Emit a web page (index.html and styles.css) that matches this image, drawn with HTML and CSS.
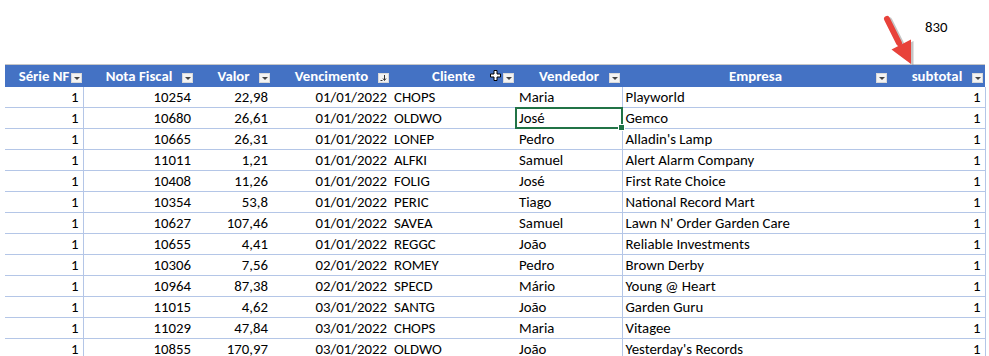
FILE: index.html
```html
<!DOCTYPE html>
<html>
<head>
<meta charset="utf-8">
<link rel="stylesheet" href="styles.css">
</head>
<body>
<div class="top">
  <span class="total">830</span>
  <svg class="arrow" width="60" height="70" viewBox="870 5 60 70">
    <g transform="translate(2.5,1.5)" fill="#8c8c8c" stroke="#8c8c8c" opacity="0.5">
      <line x1="887" y1="19" x2="899" y2="43" stroke-width="6" stroke-linecap="round"/>
      <polygon points="911,39.5 891.5,49.5 911,64" stroke-width="0"/>
    </g>
    <g fill="#e8423a" stroke="#e8423a">
      <line x1="887" y1="19" x2="899" y2="43" stroke-width="6" stroke-linecap="round"/>
      <polygon points="911,39.5 891.5,49.5 911,64" stroke-width="0"/>
    </g>
  </svg>
</div>
<table class="sheet">
  <colgroup>
    <col style="width:78px"><col style="width:112px"><col style="width:77px"><col style="width:119px"><col style="width:125px"><col style="width:106px"><col style="width:267px"><col style="width:96px">
  </colgroup>
  <thead>
    <tr>
      <th class="c1">Série NF<span class="dd"></span></th>
      <th>Nota Fiscal<span class="dd"></span></th>
      <th>Valor<span class="dd"></span></th>
      <th>Vencimento<span class="dd sort"><svg width="9" height="8" viewBox="0 0 9 8"><path d="M5.5 1v5M4 4.5l1.5 2 1.5-2" stroke="#333" stroke-width="1" fill="none"/><path d="M1.5 6.5h2" stroke="#333"/></svg></span></th>
      <th>Cliente<svg class="cursor" width="11" height="11" viewBox="0 0 11 11"><path d="M4 0.5h3v3.5h3.5v3h-3.5v3.5h-3v-3.5h-3.5v-3h3.5z" fill="#fff" stroke="#000" stroke-width="1"/></svg><span class="dd"></span></th>
      <th class="c6">Vendedor<span class="dd"></span></th>
      <th class="c7">Empresa<span class="dd"></span></th>
      <th class="c8">subtotal<span class="dd"></span></th>
    </tr>
  </thead>
  <tbody>
    <tr><td class="c1 r">1</td><td class="r">10254</td><td class="r">22,98</td><td class="r">01/01/2022</td><td>CHOPS</td><td class="c6">Maria</td><td class="c7">Playworld</td><td class="c8 r">1</td></tr>
    <tr><td class="c1 r">1</td><td class="r">10680</td><td class="r">26,61</td><td class="r">01/01/2022</td><td>OLDWO</td><td class="c6 sel">José<span class="selbox"><span class="handle"></span></span></td><td class="c7">Gemco</td><td class="c8 r">1</td></tr>
    <tr><td class="c1 r">1</td><td class="r">10665</td><td class="r">26,31</td><td class="r">01/01/2022</td><td>LONEP</td><td class="c6">Pedro</td><td class="c7">Alladin's Lamp</td><td class="c8 r">1</td></tr>
    <tr><td class="c1 r">1</td><td class="r">11011</td><td class="r">1,21</td><td class="r">01/01/2022</td><td>ALFKI</td><td class="c6">Samuel</td><td class="c7">Alert Alarm Company</td><td class="c8 r">1</td></tr>
    <tr><td class="c1 r">1</td><td class="r">10408</td><td class="r">11,26</td><td class="r">01/01/2022</td><td>FOLIG</td><td class="c6">José</td><td class="c7">First Rate Choice</td><td class="c8 r">1</td></tr>
    <tr><td class="c1 r">1</td><td class="r">10354</td><td class="r">53,8</td><td class="r">01/01/2022</td><td>PERIC</td><td class="c6">Tiago</td><td class="c7">National Record Mart</td><td class="c8 r">1</td></tr>
    <tr><td class="c1 r">1</td><td class="r">10627</td><td class="r">107,46</td><td class="r">01/01/2022</td><td>SAVEA</td><td class="c6">Samuel</td><td class="c7">Lawn N' Order Garden Care</td><td class="c8 r">1</td></tr>
    <tr><td class="c1 r">1</td><td class="r">10655</td><td class="r">4,41</td><td class="r">01/01/2022</td><td>REGGC</td><td class="c6">João</td><td class="c7">Reliable Investments</td><td class="c8 r">1</td></tr>
    <tr><td class="c1 r">1</td><td class="r">10306</td><td class="r">7,56</td><td class="r">02/01/2022</td><td>ROMEY</td><td class="c6">Pedro</td><td class="c7">Brown Derby</td><td class="c8 r">1</td></tr>
    <tr><td class="c1 r">1</td><td class="r">10964</td><td class="r">87,38</td><td class="r">02/01/2022</td><td>SPECD</td><td class="c6">Mário</td><td class="c7">Young @ Heart</td><td class="c8 r">1</td></tr>
    <tr><td class="c1 r">1</td><td class="r">11015</td><td class="r">4,62</td><td class="r">03/01/2022</td><td>SANTG</td><td class="c6">João</td><td class="c7">Garden Guru</td><td class="c8 r">1</td></tr>
    <tr><td class="c1 r">1</td><td class="r">11029</td><td class="r">47,84</td><td class="r">03/01/2022</td><td>CHOPS</td><td class="c6">Maria</td><td class="c7">Vitagee</td><td class="c8 r">1</td></tr>
    <tr><td class="c1 r">1</td><td class="r">10855</td><td class="r">170,97</td><td class="r">03/01/2022</td><td>OLDWO</td><td class="c6">João</td><td class="c7">Yesterday's Records</td><td class="c8 r">1</td></tr>
  </tbody>
</table>
</body>
</html>
```

FILE: styles.css
```css
html, body {
  margin: 0;
  padding: 0;
  background: #ffffff;
}
body {
  font-family: Carlito, Lato, "Liberation Sans", sans-serif;
  font-size: 14.8px;
  color: #000;
  overflow: hidden;
}
.top {
  position: relative;
  height: 64px;
}
.total {
  display: inline-block;
  margin-left: 925px;
  padding-top: 18px;
  line-height: 18px;
}
.arrow {
  position: absolute;
  left: 870px;
  top: 5px;
}
.sheet {
  margin-left: 5px;
  border-collapse: collapse;
  table-layout: fixed;
  width: 980px;
}
.sheet th {
  position: relative;
  background: #4472c4;
  color: #fff;
  font-weight: bold;
  text-align: center;
  height: 22px;
  padding: 0;
  border-top: 1px solid #c6c6c6;
  white-space: nowrap;
  line-height: 22px;
}
.sheet td {
  height: 20px;
  padding: 0 3px;
  border-bottom: 1px solid #b4c6e7;
  line-height: 20px;
  white-space: nowrap;
}
.sheet td.r {
  text-align: right;
  padding-right: 4px;
}
.sheet td.c6 {
  position: relative;
}
.sheet td.c7 {
  border-left: 1px solid #b4c6e7;
}
.sheet td.c8 {
  border-right: 1px solid #b4c6e7;
}
.sheet td.c1 {
  border-right: 1px solid #b4c6e7;
}
.dd {
  position: absolute;
  right: 2px;
  top: 8px;
  width: 11px;
  height: 10px;
  box-sizing: border-box;
  background: #f3f3f3;
  border: 1px solid #d9d9d9;
}
.dd::after {
  content: "";
  position: absolute;
  left: 2px;
  top: 3px;
  border-left: 3px solid transparent;
  border-right: 3px solid transparent;
  border-top: 3px solid #444;
}
.dd.sort::after {
  display: none;
}
.dd.sort svg {
  display: block;
}
.c1 .dd {
  right: 1px;
}
.cursor {
  position: absolute;
  left: 99px;
  top: 5px;
}
.selbox {
  position: absolute;
  left: -1px;
  top: -1px;
  right: -1px;
  bottom: -1px;
  border: 2px solid #217346;
  pointer-events: none;
}
.handle {
  position: absolute;
  right: -4px;
  bottom: -4px;
  width: 5px;
  height: 5px;
  background: #217346;
  border: 1px solid #fff;
}
```
